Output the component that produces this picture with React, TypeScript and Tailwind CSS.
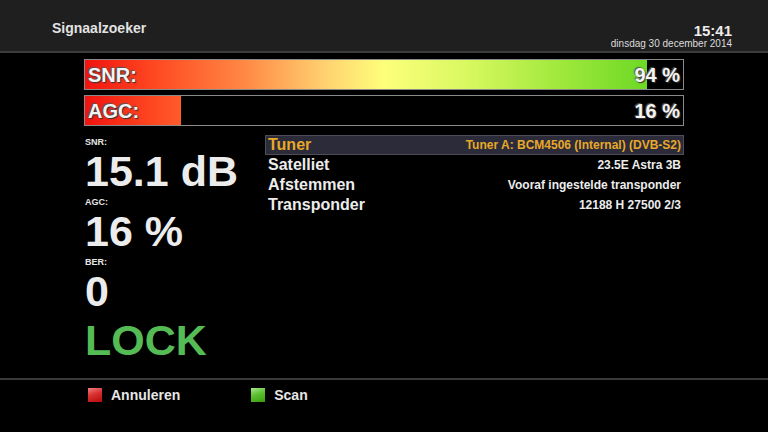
import React from "react";

interface BarProps {
  label: string;
  percent: number;
}

function SignalBar({ label, percent }: BarProps) {
  return (
    <div className="relative h-[31px] w-[600px] border border-[#8a8a8a] bg-black">
      {/* fill: the gradient always spans the whole bar and is clipped by the level */}
      <div className="h-full overflow-hidden" style={{ width: `${percent}%` }}>
        <div className="h-full w-[598px] bg-[linear-gradient(to_right,#f0140f_0%,#ff4a22_12%,#ff8a45_27%,#ffd070_40%,#fdff7a_50%,#d8f860_64%,#9ee83a_80%,#58d21c_100%)]" />
      </div>
      <div className="absolute inset-0 flex items-center justify-between px-[3px] text-[20px] font-bold leading-none text-[#f4f4f4] [text-shadow:1px_1px_1px_#333,-1px_-1px_1px_#555]">
        <span>{label}</span>
        <span>{percent} %</span>
      </div>
    </div>
  );
}

function Reading({ label, value }: { label: string; value: string }) {
  return (
    <div className="h-[60px]">
      <div className="pt-[2px] text-[9px] font-bold leading-none text-[#e6e6e6]">{label}</div>
      <div className="mt-[3px] text-[43px] font-bold leading-[43px] text-[#ececec]">{value}</div>
    </div>
  );
}

const rows = [
  { name: "Satelliet", value: "23.5E Astra 3B" },
  { name: "Afstemmen", value: "Vooraf ingestelde transponder" },
  { name: "Transponder", value: "12188 H 27500 2/3" },
];

export default function App() {
  return (
    <div className="flex h-[432px] w-[768px] flex-col overflow-hidden bg-black font-['Liberation_Sans',Arial,sans-serif]">
      {/* Header */}
      <div className="flex h-[53px] items-end justify-between border-b-2 border-[#3c3c3c] bg-[#1f1f1f] pb-[2px] pl-[52px] pr-[36px]">
        <div className="mb-[10px] text-[14px] font-bold text-[#e2e2e2]">Signaalzoeker</div>
        <div className="flex flex-col items-end leading-none">
          <div className="text-[15px] font-bold text-[#ececec]">15:41</div>
          <div className="mt-[1px] text-[10px] text-[#dcdcdc]">dinsdag 30 december 2014</div>
        </div>
      </div>

      {/* Bars */}
      <div className="mt-[6px] flex flex-col gap-[5px] pl-[84px]">
        <SignalBar label="SNR:" percent={94} />
        <SignalBar label="AGC:" percent={16} />
      </div>

      <div className="flex flex-1 pl-[85px] pt-[10px]">
        {/* Left column readings */}
        <div className="flex w-[180px] flex-col">
          <Reading label="SNR:" value="15.1 dB" />
          <Reading label="AGC:" value="16 %" />
          <Reading label="BER:" value="0" />
          <div className="mt-[3px] text-[43px] font-bold leading-[43px] text-[#55bb55]">LOCK</div>
        </div>

        {/* Tuner info list */}
        <div className="-mt-[1px] w-[419px]">
          <div className="flex h-[20px] items-center justify-between border border-[#4d4d58] bg-[#2b2b3a] px-[2px]">
            <span className="text-[16px] font-bold text-[#e8a828]">Tuner</span>
            <span className="text-[12px] font-bold text-[#e8a828]">Tuner A: BCM4506 (Internal) (DVB-S2)</span>
          </div>
          {rows.map((r) => (
            <div key={r.name} className="flex h-[20px] items-center justify-between px-[3px]">
              <span className="text-[16px] font-bold text-[#ececec]">{r.name}</span>
              <span className="text-[12px] font-bold text-[#ececec]">{r.value}</span>
            </div>
          ))}
        </div>
      </div>

      {/* Footer */}
      <div className="h-[54px] border-t-2 border-[#3a3a3a]">
        <div className="flex h-[30px] items-center pl-[88px] text-[14px] font-bold text-[#e6e6e6]">
          <span className="h-[14px] w-[14px] bg-[linear-gradient(160deg,#f08080_0%,#d83030_45%,#b80a0a_100%)]" />
          <span className="ml-[9px]">Annuleren</span>
          <span className="ml-[71px] h-[14px] w-[14px] bg-[linear-gradient(160deg,#a8e890_0%,#5cc030_45%,#3a9a10_100%)]" />
          <span className="ml-[9px]">Scan</span>
        </div>
      </div>
    </div>
  );
}
